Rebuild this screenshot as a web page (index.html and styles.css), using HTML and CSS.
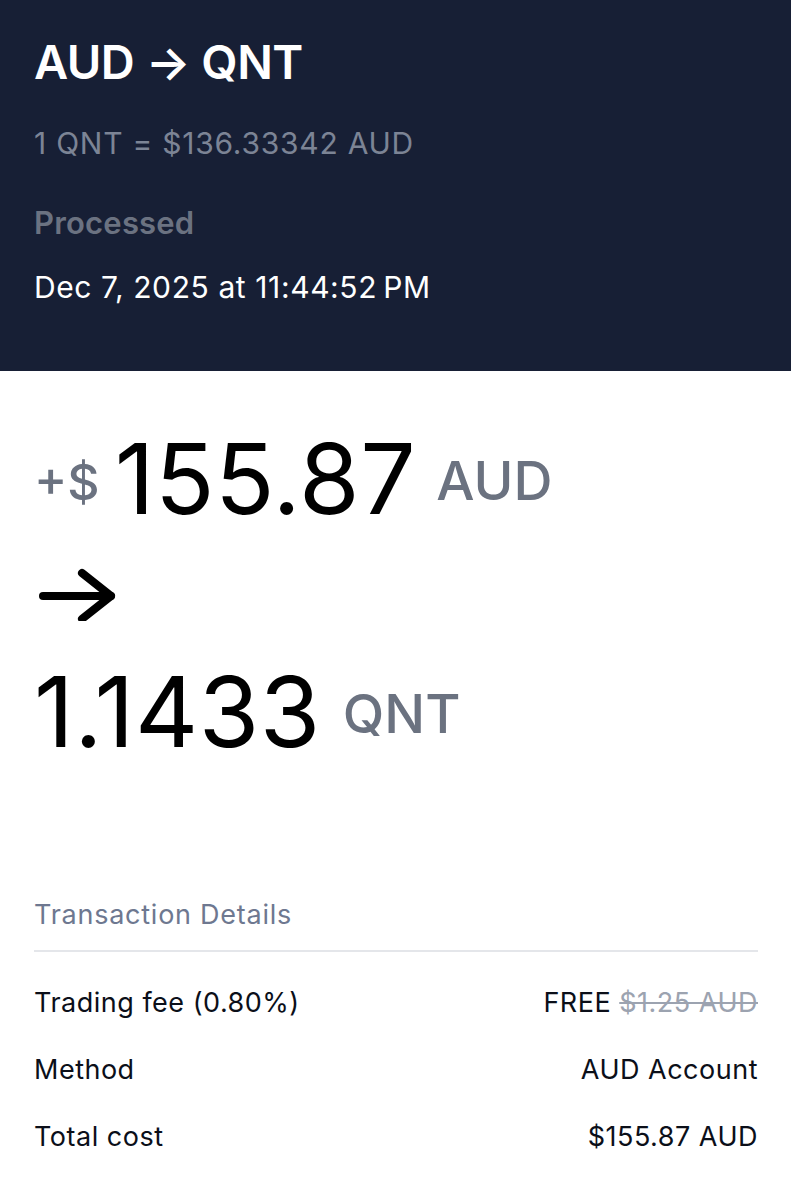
FILE: index.html
```html
<!DOCTYPE html>
<html lang="en">
<head>
<meta charset="utf-8">
<title>AUD → QNT</title>
<link rel="stylesheet" href="styles.css">
</head>
<body>
<header class="hero">
  <h1 class="hero-title">AUD → QNT</h1>
  <p class="hero-rate">1 QNT = $136.33342 AUD</p>
  <p class="hero-status">Processed</p>
  <p class="hero-date">Dec 7, 2025 at 11:44:52&#8239;PM</p>
</header>
<main class="content">
  <section class="amounts">
    <div class="amount-line">
      <span class="amount-prefix">+$</span><span class="amount-value">155.87</span><span class="amount-unit">AUD</span>
    </div>
    <div class="amount-arrow">
      <svg width="84" height="60" viewBox="0 0 84 60" fill="none" stroke="#000" stroke-width="8" stroke-linecap="round" stroke-linejoin="round">
        <path d="M10 35 H78"/>
        <path d="M49 12 L78 35 L49 58"/>
      </svg>
    </div>
    <div class="amount-line second">
      <span class="amount-value">1.1433</span><span class="amount-unit">QNT</span>
    </div>
  </section>
  <section class="details">
    <h2 class="details-title">Transaction Details</h2>
    <div class="details-rows">
      <div class="row">
        <span class="row-label">Trading fee (0.80%)</span>
        <span class="row-value">FREE <s class="strike">$1.25 AUD</s></span>
      </div>
      <div class="row">
        <span class="row-label">Method</span>
        <span class="row-value">AUD Account</span>
      </div>
      <div class="row">
        <span class="row-label">Total cost</span>
        <span class="row-value">$155.87 AUD</span>
      </div>
    </div>
  </section>
</main>
</body>
</html>
```

FILE: styles.css
```css
* { box-sizing: border-box; }
html, body {
  margin: 0;
  padding: 0;
  background: #fff;
}
body {
  width: 791px;
  font-family: Inter, "Noto Sans", "Liberation Sans", sans-serif;
  color: #000;
}
.hero {
  background: #171f35;
  height: 371px;
  padding: 34px 34px 0;
}
.hero-title {
  margin: 0;
  font-size: 47px;
  line-height: 56px;
  font-weight: 600;
  color: #fff;
  letter-spacing: -0.5px;
}
.hero-rate {
  margin: 35px 0 0;
  font-size: 30px;
  line-height: 36px;
  color: #7c8495;
  letter-spacing: 0.75px;
}
.hero-status {
  margin: 44px 0 0;
  font-size: 31px;
  line-height: 36px;
  font-weight: 600;
  color: #6b7281;
  letter-spacing: 0.2px;
}
.hero-date {
  margin: 28px 0 0;
  font-size: 30px;
  line-height: 36px;
  color: #fff;
  letter-spacing: 0.6px;
}
.content {
  padding: 0 33px 0 34px;
}
.amounts {
  padding-top: 53px;
}
.amount-line {
  font-size: 98px;
  line-height: 110px;
  height: 110px;
  white-space: nowrap;
}
.amount-prefix {
  font-size: 50px;
  color: #6b7280;
  font-weight: 500;
  margin-right: 15px;
  vertical-align: 14px;
}
.amount-value {
  font-weight: 400;
  letter-spacing: 0.5px;
  color: #000;
}
.amount-unit {
  font-size: 54px;
  font-weight: 500;
  color: #6b7280;
  margin-left: 20px;
  vertical-align: 14px;
}
.amount-arrow {
  margin-top: 27px;
  height: 60px;
}
.amount-arrow svg {
  display: block;
  margin-left: -1px;
}
.amount-line.second {
  margin-top: 36px;
}
.amount-line.second .amount-unit {
  margin-left: 22px;
}
.details {
  margin-top: 132px;
}
.details-title {
  margin: 0;
  font-size: 27px;
  line-height: 32px;
  font-weight: 400;
  color: #6e7890;
  letter-spacing: 0.75px;
  padding-bottom: 19px;
  border-bottom: 2px solid #e4e6ea;
}
.details-rows {
  display: flex;
  flex-direction: column;
  padding-top: 33px;
  gap: 31px;
}
.row {
  display: flex;
  justify-content: space-between;
  align-items: baseline;
  font-size: 27px;
  line-height: 36px;
  color: #0b0f19;
  letter-spacing: 0.5px;
}
.strike {
  color: #9ca3b0;
  text-decoration: line-through;
  text-decoration-thickness: 2px;
}
```
